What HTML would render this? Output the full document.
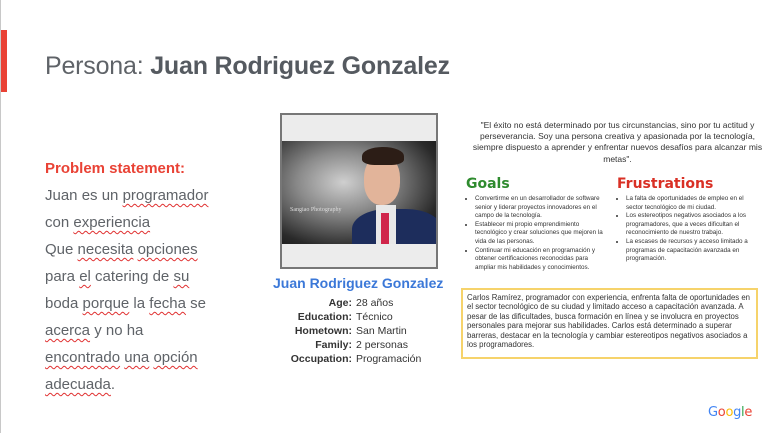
<!DOCTYPE html>
<html><head><meta charset="utf-8"><style>
body{margin:0;width:771px;height:433px;background:#fff;position:relative;overflow:hidden;font-family:"Liberation Sans",sans-serif;}
.a{position:absolute}
.ps{font-family:"DejaVu Sans","Liberation Sans",sans-serif}
.w{text-decoration:underline wavy #e03030;text-decoration-thickness:1px;text-underline-offset:3px}
ul{margin:0;padding-left:11px}
li{margin:0}
</style></head><body>
<div class="a" style="left:0;top:0;width:1px;height:433px;background:#c8c8c8"></div>
<div class="a" style="left:1px;top:30px;width:6px;height:62px;background:#e94235"></div>
<div class="a" style="left:45px;top:52px;font-size:25px;color:#5f6368;white-space:nowrap;letter-spacing:-0.2px">Persona: <b style="color:#555a60">Juan Rodriguez Gonzalez</b></div>
<div class="a" style="left:45px;top:155px;font-size:15px;line-height:27px;color:#5f6368;width:200px">
<b style="color:#e94235">Problem statement:</b><br>Juan es un <span class="w">programador</span><br>con <span class="w">experiencia</span><br>Que <span class="w">necesita</span> <span class="w">opciones</span><br>para <span class="w">el</span> catering de <span class="w">su</span><br>boda <span class="w">porque</span> la <span class="w">fecha</span> se<br><span class="w">acerca</span> y no ha<br><span class="w">encontrado</span> <span class="w">una</span> <span class="w">opción</span><br><span class="w">adecuada</span>.</div>
<div class="a" style="left:280px;top:113px;width:154px;height:152px;border:2px solid #777;background:#ececec"></div>
<div class="a" style="left:282px;top:141px;width:154px;height:103px;background:radial-gradient(ellipse at 40% 40%,#cfcfcf 0%,#8a8a8a 35%,#2a2a2a 75%,#111 100%);overflow:hidden">
<div class="a" style="left:82px;top:14px;width:36px;height:50px;border-radius:45%;background:#e2b49a"></div>
<div class="a" style="left:80px;top:6px;width:42px;height:18px;border-radius:50% 50% 30% 30%;background:#2c1d16"></div>
<div class="a" style="left:70px;top:68px;width:90px;height:50px;border-radius:40% 40% 0 0;background:#1d2d5c"></div>
<div class="a" style="left:94px;top:64px;width:20px;height:45px;background:#e8e8e8"></div>
<div class="a" style="left:99px;top:72px;width:8px;height:35px;background:#d0254a"></div>
<div class="a" style="left:8px;top:66px;font-size:6px;color:#ddd;font-family:'Liberation Serif',serif">Sangiao Photography</div>
</div>
<div class="a" style="left:273px;top:275px;width:164px;text-align:center;font-size:14px;font-weight:bold;color:#3b78d8;white-space:nowrap">Juan Rodriguez Gonzalez</div>
<div class="a" style="left:280px;top:296px;font-size:10.5px;line-height:14px;color:#333;white-space:nowrap">
<div style="display:flex"><div style="width:72px;text-align:right;font-weight:bold;padding-right:4px">Age:</div>28 años</div>
<div style="display:flex"><div style="width:72px;text-align:right;font-weight:bold;padding-right:4px">Education:</div>Técnico</div>
<div style="display:flex"><div style="width:72px;text-align:right;font-weight:bold;padding-right:4px">Hometown:</div>San Martin</div>
<div style="display:flex"><div style="width:72px;text-align:right;font-weight:bold;padding-right:4px">Family:</div>2 personas</div>
<div style="display:flex"><div style="width:72px;text-align:right;font-weight:bold;padding-right:4px">Occupation:</div>Programación</div>
</div>
<div class="a" style="left:470px;top:120px;width:295px;text-align:center;font-size:8.5px;line-height:11.2px;color:#333">"El éxito no está determinado por tus circunstancias, sino por tu actitud y perseverancia. Soy una persona creativa y apasionada por la tecnología, siempre dispuesto a aprender y enfrentar nuevos desafíos para alcanzar mis metas".</div>
<div class="a ps" style="left:466px;top:176px;font-size:14px;font-weight:bold;color:#2e8b2e">Goals</div>
<div class="a ps" style="left:617px;top:176px;font-size:14px;font-weight:bold;color:#d93025">Frustrations</div>
<div class="a" style="left:464px;top:195px;width:145px;font-size:6.3px;line-height:8.6px;color:#333"><ul>
<li>Convertirme en un desarrollador de software senior y liderar proyectos innovadores en el campo de la tecnología.</li>
<li>Establecer mi propio emprendimiento tecnológico y crear soluciones que mejoren la vida de las personas.</li>
<li>Continuar mi educación en programación y obtener certificaciones reconocidas para ampliar mis habilidades y conocimientos.</li></ul></div>
<div class="a" style="left:615px;top:195px;width:145px;font-size:6.3px;line-height:8.6px;color:#333"><ul>
<li>La falta de oportunidades de empleo en el sector tecnológico de mi ciudad.</li>
<li>Los estereotipos negativos asociados a los programadores, que a veces dificultan el reconocimiento de nuestro trabajo.</li>
<li>La escases de recursos y acceso limitado a programas de capacitación avanzada en programación.</li></ul></div>
<div class="a" style="left:461px;top:288px;width:286px;height:64px;border:2px solid #f6d36b;padding:3px 3px 0 4px;font-size:7.8px;line-height:9.4px;color:#333">Carlos Ramírez, programador con experiencia, enfrenta falta de oportunidades en el sector tecnológico de su ciudad y limitado acceso a capacitación avanzada. A pesar de las dificultades, busca formación en línea y se involucra en proyectos personales para mejorar sus habilidades. Carlos está determinado a superar barreras, destacar en la tecnología y cambiar estereotipos negativos asociados a los programadores.</div>
<div class="a ps" style="left:708px;top:405px;font-size:13px;letter-spacing:-0.3px"><span style="color:#4285f4">G</span><span style="color:#ea4335">o</span><span style="color:#fbbc05">o</span><span style="color:#4285f4">g</span><span style="color:#34a853">l</span><span style="color:#ea4335">e</span></div>
</body></html>
